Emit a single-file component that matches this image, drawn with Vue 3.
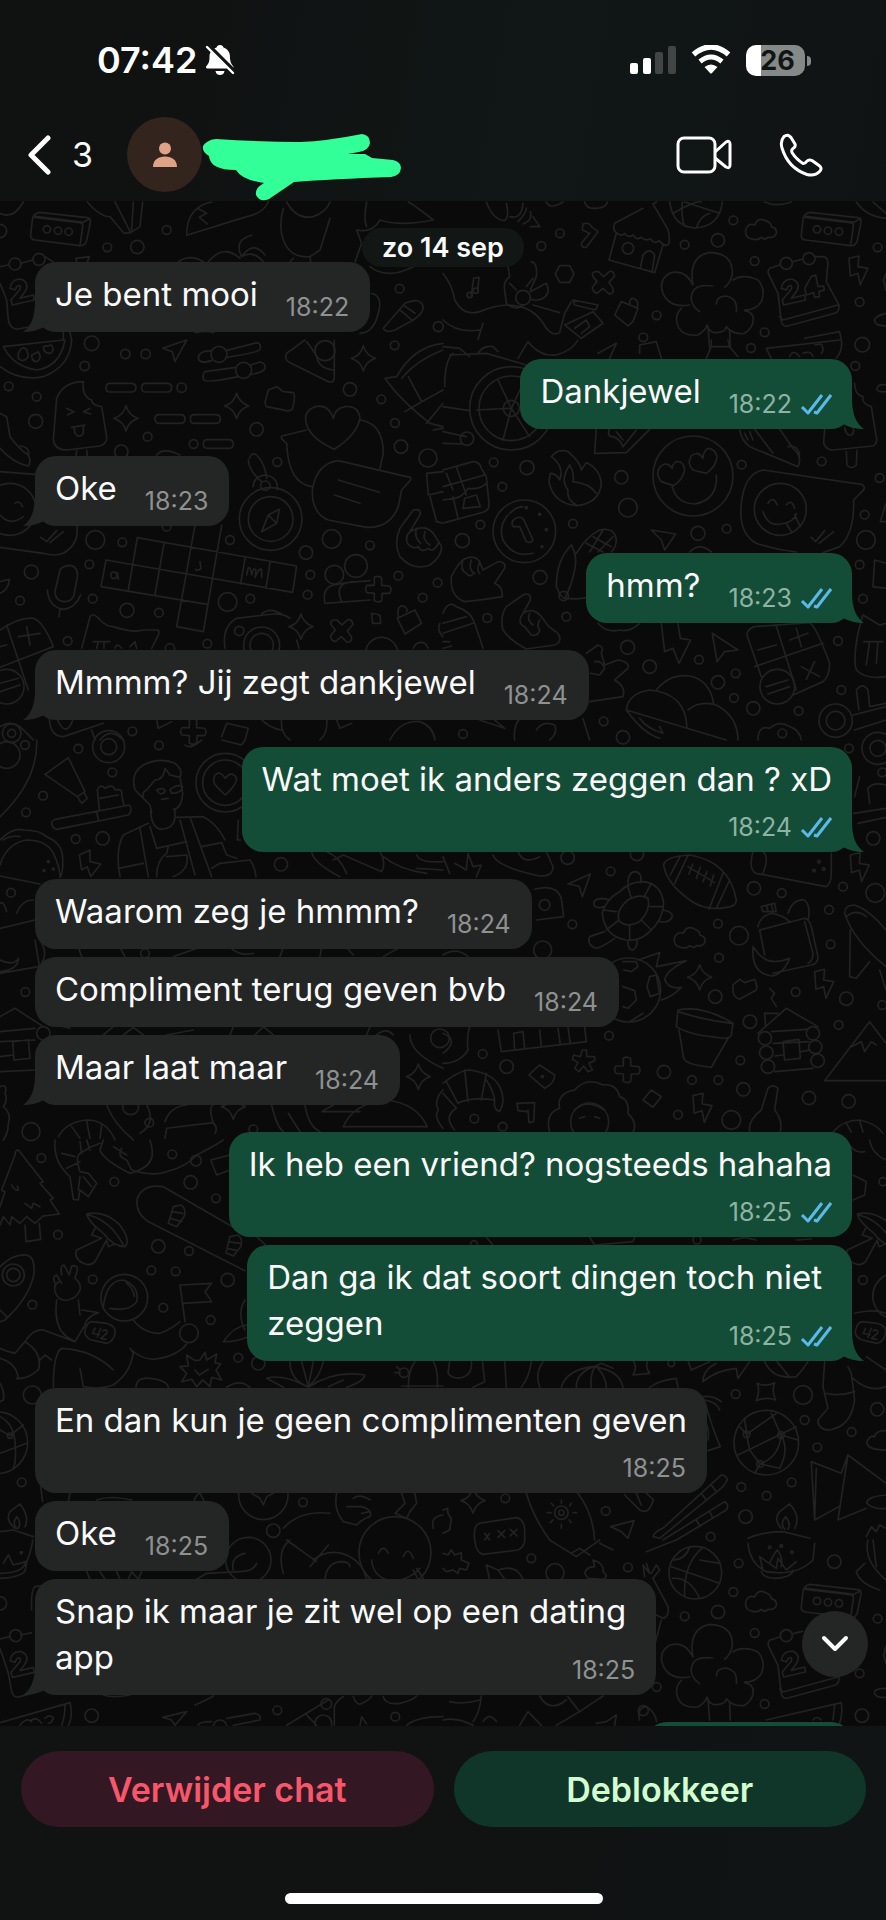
<script setup>
const messages = [
  { text: 'Je bent mooi', time: '18:22', tail: true },
  { text: 'Dankjewel', time: '18:22', out: true, tail: true },
  { text: 'Oke', time: '18:23', tail: true },
  { text: 'hmm?', time: '18:23', out: true, tail: true },
  { text: 'Mmmm? Jij zegt dankjewel', time: '18:24', tail: true },
  { text: 'Wat moet ik anders zeggen dan ? xD', time: '18:24', out: true, tail: true, below: true },
  { text: 'Waarom zeg je hmmm?', time: '18:24' },
  { text: 'Compliment terug geven bvb', time: '18:24' },
  { text: 'Maar laat maar', time: '18:24', tail: true },
  { text: 'Ik heb een vriend? nogsteeds hahaha', time: '18:25', out: true, below: true },
  { lead: 'Dan ga ik dat soort dingen toch niet', text: 'zeggen', time: '18:25', out: true, tail: true },
  { text: 'En dan kun je geen complimenten geven', time: '18:25', below: true },
  { text: 'Oke', time: '18:25' },
  { lead: 'Snap ik maar je zit wel op een dating', text: 'app', time: '18:25', tail: true }
]

// Wallpaper doodles. Motifs that occur more than once are named here.
const STAR = 'M0 -38Q8 -10 36 0Q8 8 0 38Q-8 8 -36 0Q-8 -8 0 -38Z'
const DASH = 'M12 0L76 0Q90 0 90 13Q90 26 76 26L12 26Q0 26 0 13Q0 0 12 0Z'
const PLUS = 'M-12 -36Q0 -42 10 -34L10 -12L34 -10Q42 0 34 12L12 12L10 34Q0 42 -12 34L-12 12L-34 10Q-42 0 -34 -12L-12 -12Z'
const CROSS = 'M-26 -33Q-36 -28 -31 -18L-19 -3L-33 14Q-33 27 -19 32L-1 17L17 34Q34 32 29 17L17 0L34 -20Q31 -36 19 -34L1 -18L-15 -33Z'
const BOX = 'M105 652L240 668Q250 670 248 680L240 737L105 720Q90 718 92 705L97 660Q99 640 118 637L262 653Q273 656 271 668L260 722Q255 738 240 737M100 648L250 667L270 656'
const CLOUD = 'M930 718Q905 715 908 690Q915 668 935 675Q945 650 968 662Q985 668 985 680Q1003 685 1000 700Q995 715 975 712Q965 722 955 712Q945 722 930 718Z'
const TREE = 'M750 855Q735 770 800 757Q870 760 868 820Q865 845 845 862M750 855Q725 805 680 820Q645 840 660 880Q680 925 740 915M770 935Q742 915 745 890Q750 850 808 858M870 840Q900 820 945 840Q970 870 955 905Q940 930 905 930M820 912Q820 888 850 888Q885 895 880 935M715 925Q690 950 708 985Q725 1010 765 1005Q790 990 792 975Q800 1000 820 998Q850 995 850 980Q870 1005 905 1000Q935 980 930 950Q925 935 905 932M795 980L800 1045M860 990L862 1045'
const CALENDAR = 'M1010 795L980 805Q972 815 978 825L1005 880L1015 965Q1020 982 1035 978L1175 940Q1190 935 1188 915L1150 845L1155 790Q1155 772 1140 770L1118 770M1050 785L1078 778M1010 950L1020 960L1185 915'
const TWO = 'M1015 865Q1020 835 1050 838Q1075 850 1060 875L1045 895L1085 885L1088 900L1022 915L1018 900L1045 868Q1050 850 1035 860L1030 870Z'
const FOUR = 'M1090 885L1085 865L1105 830L1118 825L1125 860L1142 858L1144 870L1128 875L1130 890L1115 892L1112 878Z'
const BOLT = 'M1218 775L1248 768L1245 800L1275 805L1252 855L1245 820L1222 828Z'
const MUSHROOM = 'M260 222Q310 210 355 250Q395 300 375 320Q340 320 310 280Q265 245 260 222ZM285 265L275 285L305 295L230 330Q220 355 250 370Q270 380 285 365L320 300L325 320L345 312M265 225Q330 240 370 315'
const BADGE = 'M275 545L320 550Q350 560 345 580Q340 605 320 610L275 600Q250 590 255 570Q260 548 275 545ZM285 565L278 580L298 585M302 565L292 592M308 572Q325 565 320 580L302 595L318 598'

const doodles = [
  {
    x: 0, y: -201,
    dots: '141 688 11;174 692 11;206 695 11;500 690 13;322 742 13;412 741 20;0 693 20;1199 866 13;1315 980 15;45 792 18;117 778 18',
    paths: [
      [BOX], [TWO, -985, 0],
      ['M0 640Q40 660 70 606M262 606Q300 650 330 650L372 700L392 698L420 680L428 606M345 606L392 698M400 606L395 690'],
      ['M560 706Q560 620 635 606M592 625L620 640L598 652L622 672M560 706L740 650Q790 640 805 606'],
      ['M850 625Q835 680 850 720Q870 775 930 770L960 750L990 655M860 606Q890 660 940 650Q980 635 990 606M880 775L870 786M930 770L932 786'],
      ['M535 786Q570 760 610 786M625 786Q670 730 720 775M725 770Q700 720 755 706M725 770Q760 720 795 765M725 770Q760 750 790 785'],
      ['M1100 606Q1090 660 1100 680M1070 690Q1120 700 1140 660Q1200 680 1300 660Q1250 620 1225 606M1070 690L1085 730L1065 786M1110 800Q1160 840 1240 800'],
      ['M0 800L25 795M62 790L98 780M135 770L165 790M0 850L20 900L25 960Q30 985 50 988L120 975M230 786L228 775L268 770L262 786'],
      ['M1150 985L1215 910Q1260 890 1270 920Q1270 940 1240 960L1185 990Q1155 1000 1150 985M1200 930L1235 960M1210 915L1245 940'],
      ['M1115 880Q1150 890 1135 940Q1120 1000 1080 1000M585 998Q620 990 640 998M190 998L190 1020M210 998L215 1020']
    ]
  },
  {
    x: 443, y: -201,
    dots: '351 700 13;295 738 13;871 661 13;725 734 13;825 721 20;935 783 13;1304 742 13;1250 906 13;641 946 13;965 997 13;601 1012 13;240 893 22;555 745 17;1030 790 18;1098 776 18;1122 688 11;1155 692 11;1188 695 11;80 885 8;98 872 8',
    paths: [
      [BOX, 983, 0], [CLOUD], [TREE], [CALENDAR], [TWO], [FOUR], [BOLT], [CROSS, 481, 848],
      ['M680 606Q690 680 755 684Q830 680 838 606M690 640Q760 600 775 606M718 606Q715 660 725 678M725 606L830 640M760 684Q770 650 800 640'],
      ['M600 625L515 670Q508 690 520 698Q535 712 545 700Q555 715 570 705Q580 722 595 712Q610 725 622 716Q635 735 648 722Q670 745 678 730Q682 700 670 680L630 612L640 606M520 700L498 780L635 818L660 735M592 805L600 765Q620 740 635 765L628 812'],
      ['M350 797L380 797L393 822L380 847L350 847L337 822Z'],
      ['M420 672Q440 665 445 680L465 695L430 742Q415 745 415 730L440 700L418 690Z'],
      ['M130 606Q150 660 185 662Q200 650 190 610M200 650Q235 660 240 610M225 665Q250 640 250 625M240 672Q270 660 262 635M262 680L290 680L270 650'],
      ['M195 800L200 830Q180 845 185 870L190 910Q220 935 240 915M262 870L280 830Q285 790 265 785M250 860L270 835M262 875L310 850Q325 880 300 895Q285 905 262 898M220 870L200 850M85 885L92 835L108 832L104 870'],
      ['M0 820Q30 860 35 900Q60 950 110 935Q180 905 230 920Q280 930 310 985Q330 1010 350 998L365 940L385 905M120 970L105 1018M0 960Q40 1000 110 990M270 915L350 938'],
      ['M390 900L465 915L458 930L395 915ZM365 975L450 935L480 970L415 1015ZM395 985L430 960L440 980L415 1000'],
      ['M515 945L535 905L585 925L570 965L555 978ZM560 912Q560 890 575 897Q590 905 582 925'],
      ['M1329 940Q1290 950 1295 965Q1300 978 1329 978M1329 820L1322 840L1329 870M310 606Q320 630 360 606M425 606Q430 628 460 625Q490 625 493 606M965 606Q1000 622 1045 606M1240 606Q1270 650 1329 655M1290 606L1329 640M1085 1015L1190 995L1195 1020']
    ]
  },
  {
    x: 0, y: 139,
    dots: '376 42 14;437 42 14;254 78 14;26 139 13;110 170 13;107 244 21;545 143 14;364 335 20;443 290 13;581 312 13;770 268 20;1050 148 20;1184 16 13;1144 178 13;1185 249 13;1203 320 20;1284 354 27;832 366 13;796 437 14;657 43 24;731 91 24;812 537 94;812 537 67;286 600 28;367 607 13;268 673 13;94 696 21;60 782 13;278 776 13;381 811 21;477 818 13;683 786 28;751 776 13;690 600 13;995 597 28;918 638 20;1110 616 13;931 704 13;923 764 13;1195 707 13;1068 678 34;1003 704 28;1313 728 13;1268 773 13;203 903 13;622 911 13;718 873 14;785 915 54;785 915 35;1145 940 48;500 560 13;35 1180 12;35 1180 28;397 1174 13;510 925 14;30 508 78;275 10 22;975 32 30;20 1040 52',
    paths: [
      [STAR, 1090, 55], [STAR, 378, 235], [STAR, 710, 198], [STAR, 903, 860], [PLUS, 1135, 748], [PLUS, 580, 1175], [CROSS, 1025, 873],
      [DASH, 318, 130], [DASH, 425, 130], [DASH, 465, 224], [DASH, 571, 224], [DASH, 610, 299],
      ['M0 80Q60 125 130 110Q210 80 215 0M10 20Q40 80 110 90Q180 80 195 0M10 20L190 0M55 40Q65 15 80 28L85 50Q70 70 55 55ZM95 45L115 35Q128 55 110 65Q95 65 95 45ZM130 20L155 15Q165 35 150 40Q130 40 130 20Z'],
      ['M488 25L560 0L525 65L517 35Z'],
      ['M635 32L610 35Q590 45 597 60Q605 72 635 62M678 32L770 8Q785 10 780 28Q775 38 680 52M708 82L615 95Q605 105 612 120Q618 130 715 110M752 75L780 66Q797 68 795 85Q790 98 750 104'],
      ['M915 0L860 40Q852 55 865 65L985 125Q1005 130 1003 110L1003 0M920 5Q940 30 950 50Q955 85 1000 90'],
      ['M805 150L830 140L850 155L880 158Q888 165 878 205Q872 215 860 212L800 200Q793 195 797 180Z'],
      ['M250 125Q190 125 170 175L160 300Q165 330 200 330L300 318Q322 310 320 290L305 200Q275 195 275 180Q245 170 250 125ZM200 205L222 215L202 225M270 205L250 215L272 222M215 262L255 255M222 262L225 280Q238 298 250 280L250 258M230 332L228 348M260 330L262 348'],
      ['M0 220L20 230L30 290Q60 330 85 345Q95 365 85 378Q40 370 0 325M60 318Q90 320 85 345M0 395L105 403M230 556Q240 610 190 640Q160 650 130 640L0 622M122 592L140 605L170 572M150 608L190 575M0 525Q30 560 70 530M45 490Q60 480 68 500'],
      ['M1155 115Q1200 180 1290 250L1329 260M1155 115L1190 110Q1240 20 1329 10M1205 115Q1250 60 1329 30M1225 110L1265 185M1215 215L1265 185L1329 150M1280 250L1329 190M1300 270L1329 265'],
      ['M1000 235Q985 190 945 200Q905 215 922 260Q940 300 1003 328Q1070 285 1080 235Q1075 195 1035 200Q1005 205 1000 235Z'],
      ['M1080 240Q1150 250 1150 340L1140 385M920 270L845 288Q840 295 860 310Q865 430 935 440M1015 362Q950 370 937 450Q935 520 985 540L1100 562Q1170 565 1195 500L1205 450L1232 420Q1235 410 1220 410ZM1015 420L1138 457M1003 465L1080 490'],
      ['M785 575L805 525L838 508L830 550ZM805 525L830 550M760 440Q760 410 795 405Q835 410 832 450M748 355Q755 335 770 345Q795 370 800 415M745 360Q745 390 785 425'],
      ['M412 593L890 678L878 757L318 660L303 740L622 793M412 593L385 750M492 610L465 765M585 556L530 860L610 875L665 556M735 655L722 732M810 668L798 745M350 700Q335 690 332 705Q335 722 350 712L352 698L355 718M600 665L603 685Q595 695 587 688M740 705L745 683Q752 680 755 705Q760 680 768 690L765 712Q780 680 785 690L785 712'],
      ['M180 690Q190 675 215 677Q235 685 232 710L222 765Q215 787 190 785Q165 780 165 755ZM142 750Q145 800 190 808Q225 805 242 765M180 808L177 830'],
      ['M1060 725L1000 735Q965 745 975 790L1110 780M1025 785Q1005 740 1040 728L1110 722'],
      ['M1240 510Q1265 505 1260 525L1230 575Q1215 590 1222 610Q1240 630 1255 620M1240 510L1200 565Q1180 610 1200 650Q1240 695 1290 675Q1325 650 1325 620L1300 580Q1275 550 1230 575M1255 620Q1265 640 1285 625Q1300 640 1315 610M1250 565Q1240 590 1262 610M1275 575Q1265 600 1290 615'],
      ['M0 870Q60 830 100 835Q130 845 160 920M20 855L85 1050M0 982L160 920M55 890L120 880M80 860L90 915M0 920L20 915M0 1030L55 1015M0 1055L60 1035'],
      ['M245 925Q260 870 270 830Q280 815 300 840Q320 860 340 860Q400 880 430 870L475 870Q480 880 470 895L455 925M280 905L330 905M295 905L290 925M312 905L312 925M345 925Q350 905 365 925M390 920L405 905L410 925'],
      ['M675 925Q665 860 710 835L820 822Q850 820 870 835M785 822Q810 800 845 822M890 900L897 925M1192 835L1245 810L1265 850L1215 882ZM1195 830Q1190 795 1210 798Q1225 805 1220 815M1115 820L1140 825L1142 850L1118 850Z'],
      ['M1240 925Q1250 900 1275 910L1285 925M1320 850Q1310 870 1329 890M1329 395L1280 400L1285 465L1329 455M1290 470L1310 545L1329 550M470 345Q490 320 540 345M0 725L28 718Q25 750 0 760'],
      ['M148 1135Q150 1190 190 1190L310 1150M170 1135Q200 1200 220 1135M275 1170L285 1200M300 1200Q330 1160 370 1200M470 1140L475 1165L515 1145M780 1135Q810 1165 845 1170M845 1135Q840 1180 870 1200M980 1135Q985 1180 960 1200M1010 1140L1020 1165L1055 1150M665 1190L680 1150L745 1165L735 1200M1170 1200Q1200 1140 1260 1145Q1300 1160 1305 1200M0 1160Q30 1140 60 1160Q80 1180 100 1200']
    ]
  },
  {
    x: 443, y: 139,
    dots: '924 24 13;1258 14 22;1237 78 13;205 205 125;205 205 97;205 205 24;72 296 20;152 367 13;252 383 21;178 440 13;535 412 20;555 503 28;112 554 13;58 602 21;390 551 13;244 574 94;291 712 21;133 834 13;370 830 13;750 408 120;896 374 13;1136 364 13;1310 414 13;1265 524 13;1269 600 28;1012 508 78;765 580 21;851 566 13;1250 674 13;1260 776 13;554 922 21;620 980 20;768 959 13;878 1000 13;825 1027 20;873 1074 13;931 1105 20;1067 1113 13;1195 1050 13;1185 903 13;482 1144 13;60 1182 13;540 1192 20;1003 1040 52;1178 1142 50;1178 1142 28;1018 1180 13;250 503 3;290 523 3;310 569 3;297 620 3;362 768 14',
    paths: [
      ['M205 205L165 120M205 205L245 120M205 205L100 210M205 205L180 300M205 205L260 290M20 45L130 40L250 75M105 40Q120 15 150 20L165 35M5 140Q5 60 30 40M0 200L80 212M0 275L70 290M0 310L60 312M0 20L50 25L80 50M225 55L255 5Q290 50 340 45Q390 30 405 0'],
      ['M465 40L520 10L500 55M590 40L590 15L640 5L655 55M805 0L805 20L790 55M855 0L860 20L885 50M805 20L860 20M985 55L970 25L1190 0M1195 0Q1200 30 1180 55M1040 50Q1050 25 1070 50M1080 40Q1105 30 1110 50M1115 15L1135 12Q1145 30 1135 40'],
      ['M460 265L455 340L550 338L620 268M500 265Q490 290 510 290Q530 295 540 320L580 270M520 275L540 300'],
      ['M325 350Q345 325 375 335Q415 370 415 390L430 368Q470 385 475 430Q470 490 400 497Q330 490 318 425L322 400Q340 400 350 420Q365 380 325 350ZM380 375Q350 420 375 450M380 375Q395 400 390 425Q440 430 460 460M375 450Q370 480 400 495'],
      ['M688 385Q672 362 652 380Q635 400 655 425L692 437Q720 420 725 390Q722 362 700 365Q688 372 688 385ZM780 355Q765 330 745 348Q730 370 750 390L790 400Q820 380 822 350Q815 325 795 325Q780 335 780 355ZM688 440Q700 490 755 492Q825 480 820 405'],
      ['M385 615Q340 660 340 740Q355 775 365 775Q420 780 440 768M385 615Q405 650 395 690Q385 740 365 775M400 640Q430 590 470 570Q515 560 520 600Q520 620 505 636M430 610L480 636M450 590L505 620M440 636L480 570M465 636L510 590'],
      ['M0 390L90 365Q110 365 115 385L130 410L138 490Q140 510 120 517L5 548M0 440L125 405M40 380L70 465M10 400L30 450M0 480L35 475Q60 470 75 445Q110 450 130 430M30 470L45 535M65 475L100 465L112 500L60 505Z'],
      ['M210 560Q200 540 225 532Q240 530 245 545L270 600Q262 612 250 605L230 560ZM195 525Q165 560 180 600Q210 655 270 640M200 520Q220 500 240 500'],
      ['M25 710Q50 660 70 655Q95 645 110 665L120 690L165 665Q190 665 185 685L155 730Q180 740 178 770Q120 780 65 785Q20 770 25 710ZM60 660Q50 690 70 700Q80 715 92 700M85 660Q75 690 95 700M110 665Q100 690 110 700'],
      ['M250 927Q200 900 180 870Q170 830 190 800L240 765Q265 755 262 780L240 820Q220 850 245 860L265 885Q285 890 290 870M240 820Q270 800 295 830L318 860L345 880Q360 905 335 915L250 927M260 820Q250 840 270 855M290 840Q280 855 290 870'],
      ['M890 270Q895 300 920 320L1065 380Q1080 350 1050 325L1010 268M935 268Q960 300 990 340M1035 320Q1065 315 1070 345M905 280L915 300M920 275L930 300'],
      ['M1145 268L1142 310Q1150 330 1170 330L1290 318Q1305 310 1300 290L1285 200Q1255 190 1260 170Q1235 165 1235 130M1210 335L1212 375Q1225 390 1240 375L1242 330M1205 262Q1210 290 1225 285Q1235 280 1230 262M1329 135Q1300 130 1302 150Q1310 158 1329 155'],
      ['M1060 636Q1000 630 940 610Q885 580 895 490Q905 400 960 390L1255 433Q1270 440 1260 452L1232 480Q1235 580 1190 620L1140 638M960 515Q975 560 1015 552Q1055 545 1060 520M975 490Q990 465 1003 495M1030 495Q1045 475 1055 505M1030 550L1045 575M1055 525L1072 560M1105 592L1118 605L1145 572M1128 610L1172 575'],
      ['M625 570L698 582L665 630L655 600ZM740 636Q770 605 805 636M1329 490L1312 545L1329 545M1329 670L1295 660L1290 740L1329 745'],
      ['M0 820Q15 780 40 800Q85 815 95 850L120 925M0 880L90 850M0 850L70 830M0 905L20 905M0 925L25 918'],
      ['M655 850L665 935L690 925L708 970L743 900L712 895L705 850M808 880L885 930L845 935L822 965Z'],
      ['M955 1010L915 895Q905 870 935 860L1100 848Q1120 860 1160 970Q1160 1010 1140 1025L1050 1065M1000 858L1060 1050M935 980L1140 910M945 930L1000 915M1040 900L1095 880M1060 865L1075 920M1075 980L1130 1010M1115 965L1090 1018M970 1040L1035 1020M975 1062L1040 1040'],
      ['M1329 1010Q1270 1020 1240 990Q1230 960 1245 880L1260 825L1310 855L1329 850M1262 905L1320 905M1280 905L1270 975M1305 905L1300 970'],
      ['M442 1000L470 1005L485 985Q475 960 455 965M430 940L465 915Q485 920 475 940L485 975L525 960Q560 965 555 985L515 1020Q550 1040 540 1070L440 1085'],
      ['M550 1110Q555 1060 620 1050Q730 1060 732 1165ZM640 1050Q680 1000 740 1008Q800 1020 812 1090M735 1110Q770 1080 820 1095Q885 1130 885 1200M550 1110Q600 1180 650 1195M590 1135Q610 1165 660 1180L650 1160M732 1165L850 1200M215 1200Q210 1160 230 1136M420 1136L440 1200M280 1170Q300 1140 335 1155Q345 1180 320 1200M110 1140L185 1165L150 1136'],
      ['M1248 1110L1240 1050Q1260 1025 1275 1050L1280 1100L1329 1090M1230 1125L1329 1100M1235 1170L1329 1140M945 1200Q945 1155 980 1165Q1010 1140 1040 1160Q1070 1170 1075 1200M465 850Q490 880 530 870Q560 878 590 850']
    ]
  },
  {
    x: 0, y: 539,
    dots: '235 26 13;477 16 13;337 97 13;129 167 13;78 217 13;227 297 13;308 295 20;676 128 88;676 128 68;33 458 13;76 756 13;843 373 20;326 20 48;326 20 24;145 365 3;132 392 3;160 387 3;20 45 40;93 1175 27;448 1148 13;760 1168 13;1320 895 28;392 1100 24;435 640 13;130 880 20;75 15 13',
    paths: [
      [STAR, 700, 1100], [STAR, 1255, 1010],
      ['M110 0Q115 120 0 230M135 103L205 53L255 155L232 170ZM232 170L245 190L262 175L252 158'],
      ['M165 238L388 195Q400 210 385 225L170 268Q155 265 155 245ZM298 210L292 150Q300 130 315 145Q340 130 345 150Q370 145 365 165L372 195M300 175L355 165M290 215L295 240'],
      ['M455 218L450 195L430 175L405 150Q390 100 430 75Q480 50 525 70Q550 90 540 110L548 160Q545 205 520 208M430 175Q425 155 440 150L465 120Q490 120 495 85L510 105L540 112M470 150Q495 140 495 155Q480 170 470 150ZM510 150Q530 130 548 140Q545 160 515 160ZM485 178L505 175M452 215Q455 265 485 268Q520 265 525 235L525 208'],
      ['M445 250L370 285Q345 330 360 410M420 265L445 410M450 260L470 325L560 305M530 232L610 230Q650 250 675 300M570 232L635 410M540 240L585 405M605 320L665 308L680 345L710 355M355 385L430 370M470 410Q470 360 500 340L505 320M500 350L560 345Q570 390 520 410M635 385L660 370L750 360Q765 380 768 410'],
      ['M676 115Q660 90 645 105Q635 125 650 140L676 165Q710 135 710 115Q695 90 676 115Z'],
      ['M0 300Q40 260 70 270Q120 270 140 290Q190 310 188 360Q190 400 180 412M0 375Q20 310 80 300Q140 300 160 340Q180 380 180 412M0 408L120 432M10 300Q30 285 60 290M238 345L270 330L270 365L302 372L272 410L262 380L245 390Z'],
      ['M0 490Q10 480 20 515M50 520Q65 480 100 480M0 565L105 540M105 600L120 690M0 700L115 680M0 660Q40 680 55 655Q55 690 0 695M120 600Q145 640 125 670'],
      ['M235 622L245 650M360 622L375 650M520 650L600 622M690 622Q720 650 760 640M850 622L840 650M965 622L960 650M1040 622L1060 645M1150 650L1200 622'],
      ['M0 830L45 805L130 860M0 875L105 865M0 905L105 900M38 905L85 900L90 955L42 960ZM0 995L110 990M0 950L40 945'],
      ['M190 860L210 865M310 885L340 860M370 885L400 862L430 885M500 885L580 870M700 860L690 885M765 885L790 860L820 885M1100 885L1110 860M1130 885Q1160 860 1180 885'],
      ['M0 1040Q25 1030 15 1060Q25 1080 10 1100Q35 1120 25 1150Q25 1180 10 1200M175 1190Q200 1145 260 1140Q320 1140 345 1200M215 1160L240 1195M260 1142L270 1195M305 1155L300 1195'],
      ['M320 1095Q340 1150 400 1200M440 1095Q470 1150 420 1180M495 1145Q510 1100 560 1095M640 1095Q625 1100 640 1150M495 1195L500 1165L640 1148Q655 1165 645 1180'],
      ['M815 1095Q830 1160 850 1175M865 1120Q890 1160 900 1175M915 1095Q925 1160 960 1175M1000 1095L965 1115L1080 1115M1030 1160Q1060 1090 1160 1080Q1250 1090 1282 1160ZM1329 1050Q1300 1080 1315 1110Q1300 1130 1329 1165'],
      ['M1230 885Q1230 940 1329 985M935 335Q940 370 1020 410M980 335Q1020 350 1040 400M1000 360L1030 345L1145 395Q1160 370 1140 335M1150 350Q1200 390 1280 400M1250 345Q1260 370 1329 365M1250 385L1329 390M715 240L712 300L722 300M555 15Q570 30 605 0M665 0L725 15L735 0']
    ]
  },
  {
    x: 443, y: 539,
    dots: '1218 25 13;1305 25 48;1305 25 24;1318 97 13;1291 295 20;374 353 20;503 394 13;582 342 20;933 445 20;1016 459 13;1200 440 13;1297 459 28;1128 365 4;1113 392 4;1142 387 4;388 553 13;305 495 16;299 630 27;825 551 13;888 587 28;828 653 13;1158 509 13;1163 613 13;817 770 20;1058 756 13;1210 776 20;1318 795 13;1187 855 13;921 845 20;498 887 13;119 942 13;191 980 20;663 996 20;747 1020 13;826 1020 13;892 961 13;901 1048 20;1098 1074 20;1217 1084 20;865 1140 28;705 1124 13;94 1136 13;179 1160 13;298 1010 3;966 895 20;970 938 20;975 980 20;1110 880 20;1117 921 20;1124 962 20;557 750 96;440 1146 57',
    paths: [
      [STAR, 770, 712], [PLUS, 553, 990], [CLOUD, -214, -95], [BOLT, 4, -430], [BOLT, -103, -80], [BOLT, -468, 292],
      ['M662 375Q665 350 740 345Q860 365 880 480Q880 500 850 502Q790 515 740 480Q670 430 662 375ZM712 348L682 405M735 346L695 430M860 420L820 505M840 400L798 508M735 380L815 428M750 372L738 402M772 382L760 415M792 395L780 425M812 405L802 438'],
      ['M530 455Q560 425 600 425Q655 430 662 490Q660 540 620 575Q590 605 550 600Q485 590 478 520Q490 475 530 455ZM555 480Q590 460 615 475Q625 510 590 545Q555 565 530 545Q515 515 555 480ZM555 440L565 475M625 430L605 468M660 500L622 500M625 570L595 540M560 600L560 555M490 570L528 540M480 510L520 515M555 430Q555 395 578 395Q600 400 592 428M485 500Q450 510 453 485Q465 470 500 480M660 510Q690 515 688 530Q680 550 650 545M485 575L440 590Q430 615 460 625Q480 620 515 595M555 605Q555 630 570 630Q585 620 582 598'],
      ['M375 432L442 402L418 470L408 438ZM275 448Q340 430 355 475L362 530L280 540'],
      ['M585 660L650 638L640 680L730 662Q670 690 665 720Q680 750 715 742Q690 770 655 780M620 710L640 705L650 760L622 770L612 740ZM540 740L575 752L580 780L555 805L540 800M540 665L580 665L585 680L565 695L542 690M560 845L600 820'],
      ['M870 735L890 718L905 728L935 718Q945 740 940 750L890 778Q875 775 870 755Z'],
      ['M965 645L950 570L1085 535Q1100 540 1105 560L1125 650Q1125 670 1105 675L990 700M945 560Q950 530 985 520Q1020 525 1040 545M955 500L960 515L1000 515L995 490ZM970 495L975 512M985 493L990 512M1035 520Q1050 475 1085 480Q1105 500 1095 540M1085 545L1110 640Q1110 665 1095 670M930 620L945 640Q980 680 1040 655Q1020 705 985 708Q930 700 930 640Z'],
      ['M705 810Q780 795 870 850L865 885Q860 900 820 892Q740 885 700 860ZM708 870L722 955Q730 975 805 982L855 895M705 815Q780 840 868 850'],
      ['M945 880L1030 805L1125 860M968 860L965 820L1005 820M985 875L1092 868M990 910L1098 905M1020 905L1068 898L1072 955L1025 960ZM995 948L1020 945M995 995L1110 985M1075 935L1100 930M980 745L995 760L985 775L1000 800'],
      ['M1329 910L1280 845L1145 1022L1329 1022M1225 920L1255 905L1265 935L1285 905L1300 915'],
      ['M1329 680Q1230 600 1205 520Q1205 495 1235 495Q1280 510 1329 570M1210 530Q1240 505 1270 530M1222 570L1220 710L1240 715L1280 665M1310 690L1329 750'],
      ['M930 335Q915 390 940 400L1150 440Q1165 430 1165 400L1165 340M960 335Q980 350 960 400M165 870L175 935L430 905L425 862M215 930L212 880L240 875L245 925M290 870L295 920M345 865L352 915M375 862L382 910'],
      ['M418 930L430 930L432 950L455 950L455 962L438 970L448 990L435 995L422 978L408 995L395 985L405 968L388 958L392 945L412 950ZM258 1005L290 975L335 1005Q335 1030 305 1045ZM600 1080L625 1050L655 1070L630 1102Z'],
      ['M0 1030Q50 990 80 990Q150 1000 170 1040Q190 1080 170 1115Q150 1110 155 1080Q150 1050 130 1020M65 990L75 1085M130 1000L115 1080M10 1025L45 1090Q80 1070 155 1080M0 1060L40 1105Q0 1130 35 1170'],
      ['M255 1115L225 1112L222 1090L275 1088L272 1145L258 1148L255 1110M320 1176Q305 1120 350 1105Q340 1060 395 1050Q430 1010 480 1035Q520 1030 530 1070Q560 1080 555 1120Q585 1150 570 1176M395 1110Q430 1075 485 1110M410 1135L425 1130M455 1130L470 1135'],
      ['M920 1176Q915 1140 955 1110L975 1045Q990 1030 1005 1045L995 1110Q1020 1140 1012 1176M1170 1176Q1200 1140 1250 1140Q1300 1150 1320 1180M1210 1150L1225 1176M1250 1142L1260 1176'],
      ['M150 345Q160 380 290 408Q330 410 330 380L310 335M225 335Q240 375 290 350M0 350L20 400M35 370L70 390L75 340L90 380L115 375L100 410M0 645Q40 620 75 650M80 860Q70 890 75 930Q50 970 0 970M0 880Q50 900 0 940M1235 170L1250 110M1232 220L1329 205M1245 250L1329 232M1280 190L1275 145Q1290 125 1329 135']
    ]
  },
  {
    x: 0, y: 939,
    dots: '124 54 13;343 125 13;517 43 13;588 62 16;572 127 20;648 175 13;174 284 13;475 319 20;567 333 13;454 391 13;527 394 13;683 420 20;278 418 13;97 494 13;490 503 13;632 540 13;40 405 33;40 405 20;373 473 70;715 653 13;775 670 20;97 765 27;65 1027 13;-10 908 93;790 1065 74;909 1087 13;820 1172 20;30 887 8;567 580 28;1212 698 14',
    paths: [
      [MUSHROOM], [BADGE],
      ['M0 255L10 230L30 255L35 230L60 250L80 230L105 250L130 228L178 222L150 180L160 175L120 130L130 125L55 30Q45 30 45 45L5 150L15 155L0 200M75 255L78 305L122 298L118 250M35 135Q45 155 55 150L52 138M75 190L95 205L100 190L120 200'],
      ['M165 0Q160 60 200 100L210 110L220 178L235 180L240 150L265 170L290 130L265 100L240 95Q225 50 240 40Q270 20 300 10M185 40L225 50M200 85L240 65M240 5L245 40M260 0L270 30M240 110L235 150M250 110L275 140'],
      ['M310 0L300 30Q310 60 390 100Q470 80 455 20L450 0M340 20L380 45M365 25Q350 50 380 60L395 90Q460 110 500 95Q560 80 590 45Q640 20 670 0M690 45L632 60L650 105L690 90'],
      ['M735 392L440 242Q405 215 412 175Q430 130 490 140L700 262M520 200L545 195Q560 210 552 230L530 260L505 250ZM515 215L548 220M510 235L545 245M690 290L715 285Q730 300 722 320L700 348L678 338ZM685 305L720 310M680 325L712 332M770 290L800 318'],
      ['M0 380Q40 340 80 345Q105 350 102 400Q90 470 15 540L0 545M0 510L20 530'],
      ['M165 430Q155 410 170 405L185 430M185 405Q180 375 192 375L208 405L215 378Q235 375 232 390L225 415Q245 430 240 450Q230 475 205 480Q175 485 165 455Q160 430 180 425M170 480Q160 560 200 590L225 605L255 555Q260 530 295 518L245 510M235 480L240 525M400 540Q430 580 480 580Q510 570 540 545M395 630Q420 655 460 658Q530 650 560 612M390 625L400 640Q390 700 340 735Q300 750 250 740M340 690Q280 630 185 625Q160 640 160 742M240 685L250 740M225 605L130 570Q100 565 75 605L45 640M75 605Q130 640 115 690Q80 720 50 715M0 625Q20 635 45 640M0 655Q50 670 55 715M120 660L135 645L155 660'],
      ['M310 500Q320 420 370 420Q420 440 410 485Q390 515 330 505M380 430Q400 445 403 470M555 545L540 435L635 430L615 455L635 485L548 490'],
      ['M600 660L615 637L620 660L650 642L645 668L662 672L648 690L665 720L635 712L630 740L608 720L590 740L575 718L545 725L560 700L540 680L565 678L560 645L585 662ZM585 690L598 705L625 688'],
      ['M735 480Q710 520 735 570M740 555Q700 560 670 605Q710 605 745 590M870 665Q870 720 925 740Q960 710 970 665M905 665L925 740L940 665M850 742L800 715Q850 700 925 742M925 742Q1000 690 1095 705Q1090 725 1040 742M985 740L1030 720'],
      ['M1225 742Q1225 690 1245 665M1312 742Q1315 690 1300 665M1205 738L1329 738M1190 680L1200 690M1185 698L1200 698M408 742Q410 710 450 715Q500 720 505 742M680 742Q720 715 750 742M0 730Q15 755 10 780L0 785'],
      ['M0 830Q40 850 45 905Q50 960 40 985M0 940L80 910M0 870L30 887L70 855'],
      ['M45 1165Q15 1140 30 1115L60 1092Q90 1130 75 1160M50 1165Q35 1150 50 1130Q65 1145 55 1165M0 1175L40 1170L100 1190M122 1040L128 1085M210 1060L205 1085M290 1080Q330 1065 395 1080M580 1088Q590 1060 600 1060L615 1088M755 1060L780 1075L790 1095L800 1070L820 1060'],
      ['M850 1165Q900 1110 990 1120M1010 1060Q1000 1110 1030 1145L1070 1155Q1090 1135 1110 1130Q1120 1110 1085 1100L1040 1100M1060 1075Q1080 1060 1110 1080M1085 1120L1110 1115M1205 1060L1215 1090L1185 1120L1220 1135L1230 1115L1250 1090L1245 1060M1300 1165Q1290 1130 1329 1125']
    ]
  },
  {
    x: 443, y: 939,
    dots: '762 300 12;93 312 10;1260 420 13;878 762 13;1080 765 28;1085 840 13;1226 876 13;1303 808 20;1123 922 13;970 908 97;911 883 10;1014 885 10;951 972 10;1046 1027 13;895 1041 13;971 1067 13;908 1130 20;187 1075 13;488 1113 13;803 1190 13;355 1118 20;355 1118 8;685 670 10;1320 125 12',
    paths: [
      [MUSHROOM, 983, 0], [BADGE, 983, 0], [STAR, 90, 1082],
      ['M1329 405Q1285 430 1290 480Q1300 520 1329 530M1235 520Q1290 505 1329 520M1329 690L1270 650M1230 715Q1280 760 1329 740M1145 665L1140 740L1155 805L1125 840Q1125 870 1160 870Q1225 860 1235 780L1225 700L1215 680M1145 760Q1190 770 1235 755'],
      ['M1230 105L1270 125L1265 165L1230 180M1225 20Q1240 40 1265 35M1280 0Q1285 40 1329 60M130 292L150 315M440 292L455 315L570 305L575 292M870 300L905 292L940 300M1060 300L1105 297'],
      ['M20 662L15 700Q30 720 60 712Q90 700 85 665M118 662L125 725L90 742M185 662L190 742M265 665Q260 710 235 742M300 665Q275 700 290 742M355 742Q370 690 450 680Q530 690 540 742M450 680Q400 700 400 742M455 680Q440 710 445 742M460 680Q490 710 490 742M455 680L475 670L510 685M570 662Q585 680 570 705L620 700Q605 680 615 662M620 742Q650 720 700 715L705 742M735 662L745 690L800 665M780 725Q780 690 820 670M780 725Q820 690 880 685L885 715L920 665M965 665Q990 720 1060 710Q1080 690 1095 665M1000 662L1040 712'],
      ['M943 730Q968 742 995 728Q985 755 998 780Q970 770 940 782Q952 755 943 730Z'],
      ['M890 860L911 883L1000 820M905 835L911 883L920 930L951 972L1010 985M885 945L1060 860M1014 885Q1040 930 1010 985M1014 885L985 820M1014 885L1065 900M951 972L935 1000M951 972Q1010 950 1014 885'],
      ['M780 770Q810 765 835 785M785 780Q820 785 830 810M790 800Q810 870 832 920L795 932M790 850Q800 870 795 900M1329 930Q1270 930 1272 905Q1280 885 1295 890Q1300 870 1329 872'],
      ['M1195 1000L1105 965L1115 1140L1188 1100M1120 985L1115 1140M1195 1000L1215 945L1329 1030M1215 945L1185 1140L1270 1105M1329 1065Q1270 1070 1272 1090Q1290 1110 1329 1105M1270 1190L1285 1160L1300 1175L1310 1155L1329 1165'],
      ['M650 1195L630 1190Q635 1175 660 1165L835 1005Q850 1005 853 1020L840 1040L650 1195M660 1200L845 1085Q860 1095 850 1110L700 1200M775 1060L790 1080M805 1035L820 1055M760 1140L772 1160M800 1115L810 1135'],
      ['M1015 1165Q990 1140 1010 1115L1040 1092Q1075 1130 1055 1165M1025 1168Q1010 1150 1028 1130Q1045 1150 1035 1168M915 1195Q960 1175 1020 1175L1100 1195'],
      ['M250 1060Q270 1130 320 1200M405 1060Q450 1120 455 1200M355 1080L355 1090M385 1090L380 1098M400 1118L390 1118M385 1148L378 1140M355 1165L355 1152M322 1148L330 1140M312 1118L325 1118M325 1090L332 1098M503 1160L573 1142L555 1195L535 1175Z'],
      ['M545 1065L590 1110Q610 1120 620 1105L632 1080L610 1060M580 1060L595 1095M95 1200Q90 1155 110 1150L220 1133Q240 1135 245 1165L245 1200M125 1180L140 1200M125 1200L140 1180M165 1172L185 1192M165 1192L185 1172M202 1168L222 1188M202 1188L222 1168M0 1110L15 1105Q10 1120 25 1135L20 1170L0 1180']
    ]
  },
  {
    x: 0, y: 1339,
    dots: '0 190 20;832 511 13;275 527 20;1186 530 13;979 492 16;660 560 20;64 38 3;970 550 25;47 287 18;1185 38 108;745 60 68',
    paths: [
      [TWO, -985, -503],
      ['M0 115Q50 115 75 95L80 65Q95 30 98 0M10 70L25 45L40 75L78 65Q70 100 0 100M95 210Q92 150 105 140L140 135M0 297L30 290M62 285L95 278M0 325L25 400L35 455Q40 475 60 470L125 452'],
      ['M0 548L210 488Q220 530 205 556M195 495Q195 530 185 556M60 556Q80 530 95 545M95 540Q110 530 125 550M135 535Q150 520 160 535Q155 550 145 550M488 532L560 515L525 556L515 540ZM595 556Q595 545 635 545M680 535L765 520Q785 525 780 540L700 556M860 556L985 480M1003 556L1003 500Q1010 480 1030 470M920 525L950 556'],
      ['M585 495Q620 480 640 468M310 465Q340 475 390 465M1060 470Q1065 490 1080 493Q1110 480 1115 468M1150 470Q1155 495 1200 490Q1240 480 1250 468M1080 556L1085 530L1100 552M1220 556Q1250 530 1329 530'],
      ['M260 95L270 118M300 95L315 118M350 95L360 118M385 118L395 95L415 118L425 95M590 118L620 100L720 95Q760 95 770 70M700 90Q690 50 735 40M850 100Q830 30 870 0M860 0L950 65M930 80L985 15M975 118Q980 70 1020 65Q1050 65 1050 80M940 60Q990 20 1050 50Q1090 70 1100 118'],
      ['M1115 60Q1120 120 1190 125Q1240 110 1260 85M1135 40Q1150 10 1165 40M1210 50Q1225 15 1240 55M1240 90L1255 118M1250 85L1270 115']
    ]
  },
  {
    x: 443, y: 1339,
    dots: '265 55 13;336 98 27;555 82 13;757 98 79;887 70 13;1174 65 20;871 156 13;725 229 13;825 216 20;935 279 13;1304 236 13;1250 400 13;641 441 13;965 492 13;1257 527 20;1122 183 11;1155 187 11;1188 190 11;1030 287 18;980 22 4;1015 18 4;1047 37 4;601 512 15',
    paths: [
      [BOX, 983, -504], [CLOUD, 0, -504], [TREE, 0, -504], [CALENDAR, 0, -504], [TWO, 0, -504],
      ['M685 80L830 130M780 22Q720 70 725 170M688 115Q740 110 770 175M690 60Q725 60 740 22M770 60L830 70'],
      ['M915 10Q920 70 970 95Q1060 110 1110 60L1115 10M955 95Q960 115 1000 115Q1050 110 1050 90M960 90L950 50L1000 85L1005 55L1030 90L1060 65M980 70Q990 45 1003 30Q1020 50 1015 80'],
      ['M605 110L600 75L620 100L610 70M625 100L640 75L650 90L630 115L675 200Q680 230 660 235L640 225M655 240L635 315'],
      ['M0 40L15 45L25 30L35 45L55 38L55 60L78 70L70 90L50 85L45 100L30 90L10 95L0 85M140 118L130 75L165 90L185 118M165 90Q220 70 240 118M425 100Q430 80 455 80L450 60Q485 70 480 95Q500 110 480 118L435 115ZM95 0Q100 40 120 43L225 30Q245 20 245 0M320 0L400 50L470 0M385 40L410 25L440 45M470 10L510 30M700 0L610 35'],
      ['M1310 150Q1250 130 1240 95L1265 70M1275 0Q1260 60 1329 120M1290 0L1300 80M1329 320L1322 345L1329 370M1329 445Q1290 445 1295 462Q1305 475 1329 472'],
      ['M20 485Q60 495 110 480M115 468Q110 520 90 545M0 540Q40 530 90 556M290 468Q320 520 370 480M375 470L410 515L480 468M230 556L255 515L295 556M340 556L410 515M460 550L490 545L520 525L515 556M120 545Q140 515 160 545M590 540Q580 505 610 500Q640 520 640 545M970 540L1195 488Q1200 520 1190 550M1175 495L1170 540M1110 540Q1120 525 1135 540']
    ]
  }
].map((d) => ({
  ...d,
  dots: d.dots.split(';').map((dot) => dot.split(' ').map(Number))
}))
</script>

<template>
  <div class="screen">
    <header class="top">
      <div class="status">
        <div class="clock">
          <span>07:42</span>
          <svg width="30" height="32" viewBox="0 0 30 32" aria-label="Stil">
            <path d="M15 1C17 1 18 2 18.500 3.500C23 5 25 8.500 25 13C25 18 26.500 20 28 22C29 23.500 28.500 24.500 27 24.500H2.500C1 24.500.5 23 1.500 22C4 19 4.500 17 4.500 13C4.500 8.500 7 5 11.500 3.500C12 2 13 1 15 1ZM10.500 27H19.500C19 30 17 31 15 31C13 31 11 30 10.500 27Z" fill="#fff" />
            <path d="M3 1.500L30 28.500" stroke="#111515" stroke-width="5" />
            <path d="M2 3L28 29" stroke="#fff" stroke-width="2.400" stroke-linecap="round" />
          </svg>
        </div>
        <div class="indicators">
          <svg width="46" height="30" viewBox="0 0 46 30" aria-label="Bereik">
            <rect x="0" y="18" width="8" height="11" rx="2" fill="#fff" />
            <rect x="13" y="13" width="8" height="16" rx="2" fill="#fff" />
            <rect x="25" y="7" width="8" height="22" rx="2" fill="#414645" />
            <rect x="38" y="1" width="8" height="28" rx="2" fill="#414645" />
          </svg>
          <svg width="40" height="30" viewBox="0 0 40 30" aria-label="Wifi">
            <path d="M2.500 9.500Q20-5.500 37.500 9.500" fill="none" stroke="#fff" stroke-width="5.500" />
            <path d="M9 16.500Q20 7.500 31 16.500" fill="none" stroke="#fff" stroke-width="5" />
            <path d="M13.500 22Q20 17 26.500 22L21 28Q20 29 19 28Z" fill="#fff" />
          </svg>
          <div class="battery"><span>26</span></div>
        </div>
      </div>
      <div class="bar">
        <button class="plain back" aria-label="Terug, 3 ongelezen">
          <svg width="24" height="40" viewBox="0 0 24 40"><path d="M21 3L4 20L21 37" /></svg>
          <span>3</span>
        </button>
        <button class="plain contact" aria-label="Contactgegevens">
          <span class="avatar">
            <svg width="24" height="26" viewBox="0 0 24 26">
              <circle cx="12" cy="6.500" r="6" />
              <path d="M0 25C0 18 5 14.500 12 14.500S24 18 24 25Z" />
            </svg>
          </span>
          <svg class="scribble" width="200" height="70" viewBox="0 0 200 70">
            <path d="M5 8Q9 5 14 5Q60 8 98 8Q125 7 160 0Q168 1 168 9Q167 16 157 18L146 20H163L170 24L191 26Q199 28 199 34Q198 42 189 43Q130 45 92 48L67 65Q58 69 54 61Q53 55 59 51L62 49Q40 46 34 36Q8 36 7 22Q0 18 1 12Q2 10 5 8Z" />
          </svg>
        </button>
        <div class="calls">
          <button class="plain" aria-label="Videogesprek">
            <svg width="56" height="38" viewBox="0 0 56 38">
              <rect x="2" y="2" width="37" height="34" rx="6" />
              <path d="M39 16L50 6Q54 4 54 8V29Q54 33 50 31L39 22" />
            </svg>
          </button>
          <button class="plain" aria-label="Bellen">
            <svg width="44" height="44" viewBox="0 0 44 44">
              <path d="M5 3.500Q9 .5 12 4.500L16 11Q17 14 14 15.500Q12 17 13 19.500Q17 26 24 30.500Q26 31 27.500 28.500Q30 26 33 27.500L40 32.500Q43.500 35 41 38Q36 43.500 28 41.500Q9 35 3 15Q1 8 5 3.500Z" />
            </svg>
          </button>
        </div>
      </div>
    </header>

    <main class="chat">
      <svg class="wallpaper" aria-hidden="true">
        <g v-for="(d, i) in doodles" :key="i" :transform="`translate(${d.x} ${d.y}) scale(.3333)`">
          <circle v-for="(c, j) in d.dots" :key="'c' + j" :cx="c[0]" :cy="c[1]" :r="c[2]" />
          <path v-for="(p, j) in d.paths" :key="'p' + j" :d="p[0]" :transform="`translate(${p[1] || 0} ${p[2] || 0})`" />
        </g>
      </svg>

      <div class="messages">
        <article
          v-for="(m, i) in messages"
          :key="i"
          class="bubble"
          :class="[m.out ? 'out' : 'in', { below: m.below, last: m.tail }]"
        >
          <p v-if="m.lead" class="lead">{{ m.lead }}</p>
          <div class="row">
            <p>{{ m.text }}</p>
            <div class="meta">
              <time>{{ m.time }}</time>
              <svg v-if="m.out" width="32" height="22" viewBox="0 0 32 22" aria-label="Gelezen">
                <path d="M2 14L8 20L22 2M14 19L17 20L31 2" />
              </svg>
            </div>
          </div>
          <svg v-if="m.tail" class="tail" width="34" height="30" viewBox="0 0 34 30" aria-hidden="true">
            <path d="M22 0Q22 22 34 30Q22 30 13 25L4 10Z" />
          </svg>
        </article>
        <article class="bubble out next"></article>
      </div>

      <div class="date">zo 14 sep</div>
      <button class="plain jump" aria-label="Naar beneden">
        <svg width="28" height="18" viewBox="0 0 28 18"><path d="M3 3L14 14L25 3" /></svg>
      </button>
    </main>

    <footer class="bottom">
      <div class="actions">
        <button class="delete">Verwijder chat</button>
        <button class="unblock">Deblokkeer</button>
      </div>
      <div class="home"></div>
    </footer>
  </div>
</template>

<style>
body {
  background: #111212;
}
</style>

<style scoped>
.screen {
  display: flex;
  flex-direction: column;
  height: 100vh;
  overflow: hidden;
  background: #111212;
  color: #fafafa;
  font-family: Inter, "Liberation Sans", sans-serif;
}

.screen *,
.screen *::before {
  box-sizing: border-box;
}

button {
  font: inherit;
  cursor: pointer;
  border: 0;
  padding: 0;
}

.plain {
  display: flex;
  align-items: center;
  background: none;
  color: inherit;
}

.top {
  flex: none;
  padding-top: 40px;
  background: linear-gradient(100deg, #101111 15%, #101716 60%, #101313 100%);
}

.status {
  display: flex;
  justify-content: space-between;
  align-items: center;
  height: 40px;
  padding: 0 81px 0 97px;
}

.clock {
  display: flex;
  align-items: center;
  gap: 8px;
  font-size: 36px;
  font-weight: 600;
  color: #fff;
}

.indicators {
  display: flex;
  align-items: center;
  gap: 15px;
}

.battery {
  position: relative;
  width: 59px;
  height: 31px;
  padding-left: 4px;
  border-radius: 10px;
  background: linear-gradient(90deg, #fff 26%, #858988 26%);
  color: #111515;
  font-size: 27px;
  font-weight: 700;
  line-height: 31px;
  text-align: center;
}

.battery::after {
  content: "";
  position: absolute;
  right: -6px;
  top: 11px;
  width: 4px;
  height: 10px;
  border-radius: 0 4px 4px 0;
  background: #858988;
}

.bar {
  display: flex;
  align-items: center;
  height: 121px;
  padding: 28px 63px 0 27px;
}

.back {
  gap: 21px;
  margin-right: 34px;
  font-size: 34px;
}

.back svg,
.jump svg {
  fill: none;
  stroke: #fff;
  stroke-width: 5;
  stroke-linecap: round;
  stroke-linejoin: round;
}

.avatar {
  display: flex;
  align-items: center;
  justify-content: center;
  width: 75px;
  height: 75px;
  border-radius: 50%;
  background: #33241e;
}

.avatar svg {
  fill: #dfa286;
}

.scribble {
  fill: #33ff99;
  margin-top: 28px;
}

.contact {
  height: 75px;
}

.calls {
  display: flex;
  align-items: center;
  gap: 47px;
  margin-left: auto;
}

.calls svg {
  fill: none;
  stroke: #fff;
  stroke-width: 3;
  stroke-linejoin: round;
}

.chat {
  position: relative;
  flex: 1;
  min-height: 0;
  overflow: hidden;
  background: #0a0a0a;
}

.wallpaper {
  position: absolute;
  inset: 0;
  width: 100%;
  height: 100%;
  fill: none;
  stroke: #222;
  stroke-width: 5;
  stroke-linecap: round;
  stroke-linejoin: round;
}

.messages {
  position: relative;
  display: flex;
  flex-direction: column;
  gap: 8px;
  padding: 61px 34px 0 35px;
}

.bubble {
  position: relative;
  flex: none;
  padding: 9px 20px 13px;
  border-radius: 21px;
  font-size: 33px;
  line-height: 46px;
}

.bubble p {
  margin: 0;
}

.bubble .lead {
  padding-right: 10px;
}

.row {
  display: flex;
  align-items: flex-end;
  justify-content: space-between;
  gap: 28px;
}

.row p {
  padding-bottom: 2px;
}

.below .row {
  flex-direction: column;
  gap: 11px;
}

.in {
  align-self: flex-start;
  background: #242626;
  --fill: #242626;
}

.out {
  align-self: flex-end;
  background: #144d37;
  --fill: #144d37;
}

.last {
  margin-bottom: 19px;
}

.meta {
  display: flex;
  align-items: center;
  gap: 8px;
  height: 24px;
  font-size: 25px;
  line-height: 24px;
  color: #8f9191;
}

.in time {
  padding-right: 1px;
}

.out .meta {
  color: #8fb3a3;
}

.meta svg {
  fill: none;
  stroke: #5ab9e8;
  stroke-width: 3;
  stroke-linejoin: round;
}

.tail {
  position: absolute;
  bottom: 0;
  right: -12px;
  fill: var(--fill);
}

.in .tail {
  right: auto;
  left: -12px;
  transform: scaleX(-1);
}

.next {
  width: 206px;
  height: 70px;
}

.date {
  position: absolute;
  top: 27px;
  left: 50%;
  transform: translateX(-50%);
  padding: 0 20px;
  border-radius: 20px;
  background: #121716;
  font-size: 27px;
  font-weight: 600;
  line-height: 39px;
  white-space: nowrap;
}

.jump {
  position: absolute;
  right: 18px;
  bottom: 49px;
  justify-content: center;
  width: 66px;
  height: 66px;
  border-radius: 50%;
  background: #242626;
}

.jump svg {
  stroke-width: 4;
}

.bottom {
  flex: none;
  display: flex;
  flex-direction: column;
  align-items: center;
  gap: 66px;
  padding: 25px 20px 16px 21px;
  background: linear-gradient(100deg, #111212 40%, #101414 100%);
}

.actions {
  display: grid;
  grid-template-columns: 1fr 1fr;
  gap: 20px;
  width: 100%;
}

.actions button {
  height: 76px;
  border-radius: 38px;
  font-size: 34px;
  font-weight: 600;
}

.delete {
  background: #331722;
  color: #f7566b;
}

.unblock {
  background: #103629;
  color: #d3fcd0;
}

.home {
  width: 318px;
  height: 11px;
  border-radius: 6px;
  background: #fff;
}
</style>
